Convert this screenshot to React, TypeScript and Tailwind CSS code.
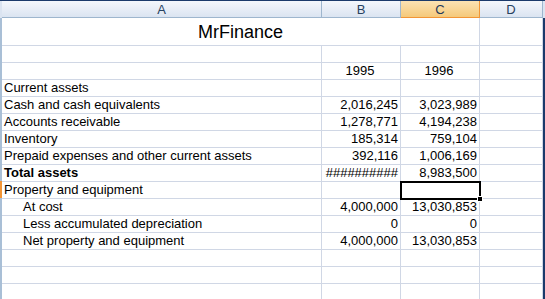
type Row = {
  a?: string
  b?: string
  c?: string
  bold?: boolean
  indent?: boolean
  selected?: boolean
}

const rows: Row[] = [
  {},
  { b: '1995', c: '1996' },
  { a: 'Current assets' },
  { a: 'Cash and cash equivalents', b: '2,016,245', c: '3,023,989' },
  { a: 'Accounts receivable', b: '1,278,771', c: '4,194,238' },
  { a: 'Inventory', b: '185,314', c: '759,104' },
  { a: 'Prepaid expenses and other current assets', b: '392,116', c: '1,006,169' },
  { a: 'Total assets', b: '##########', c: '8,983,500', bold: true },
  { a: 'Property and equipment', selected: true },
  { a: 'At cost', b: '4,000,000', c: '13,030,853', indent: true },
  { a: 'Less accumulated depreciation', b: '0', c: '0', indent: true },
  { a: 'Net property and equipment', b: '4,000,000', c: '13,030,853', indent: true },
  {},
  {},
  {},
]

const grid = 'grid grid-cols-[320px_79px_79px_63px]'
const cell = 'h-[17px] border-r border-b border-[#d0d7e5] leading-[16px] whitespace-nowrap'

function HeaderCell({ label, active }: { label: string; active?: boolean }) {
  return (
    <div
      className={
        active
          ? 'h-[17px] border-r border-b border-[#f29536] bg-gradient-to-b from-[#fbe2b3] to-[#f5c97a] text-center text-[13px] leading-[17px] text-[#1e395b]'
          : 'h-[17px] border-r border-b border-[#9eb6ce] bg-gradient-to-b from-[#f4f7fc] to-[#dbe4f1] text-center text-[13px] leading-[17px] text-[#27415f]'
      }
    >
      {label}
    </div>
  )
}

export default function App() {
  return (
    <div className="flex h-[299px] w-[545px] overflow-hidden bg-white font-['Liberation_Sans',Arial,sans-serif] text-[13px] text-black">
      <div className="flex w-[2px] flex-col">
        <div className="h-[18px] border-t border-[#1b3a6b] bg-[#dbe4f1]" />
        <div className="h-[28px] bg-[#a9bfd6]" />
        {rows.map((row, i) => (
          <div key={i} className={row.selected ? 'h-[17px] bg-[#f29536]' : 'h-[17px] bg-[#a9bfd6]'} />
        ))}
        <div className="flex-1 bg-[#a9bfd6]" />
      </div>

      <div className="flex flex-col">
        <div className={`${grid} border-t border-[#1b3a6b]`}>
          <HeaderCell label="A" />
          <HeaderCell label="B" />
          <HeaderCell label="C" active />
          <HeaderCell label="D" />
        </div>

        <div className={grid}>
          <div className="col-span-3 h-[28px] border-r border-b border-[#d0d7e5] pt-[3px] text-center text-[18px] leading-[22px]">
            MrFinance
          </div>
          <div className="h-[28px] border-r border-b border-[#d0d7e5]" />
        </div>

        {rows.map((row, i) => (
          <div key={i} className={grid}>
            <div className={`${cell} overflow-hidden ${row.indent ? 'pl-[21px]' : 'pl-[2px]'} ${row.bold ? 'font-bold' : ''}`}>{row.a}</div>
            <div className={`${cell} overflow-hidden pr-[2px] ${i === 1 ? 'text-center' : 'text-right'}`}>{row.b}</div>
            <div className={`relative ${cell} pr-[2px] ${i === 1 ? 'text-center' : 'text-right'}`}>
              {row.c}
              {row.selected && (
                <div className="absolute -left-px -top-px z-10 h-[19px] w-[81px] border-2 border-black">
                  <div className="absolute -bottom-[4px] -right-[4px] h-[6px] w-[6px] border border-white bg-black" />
                </div>
              )}
            </div>
            <div className={cell} />
          </div>
        ))}
      </div>

      <div className="flex w-[2px] flex-col">
        <div className="h-[18px] border-t border-[#1b3a6b] bg-[#dbe4f1]" />
        <div className="flex-1 bg-[#1b3a6b]" />
      </div>
    </div>
  )
}
